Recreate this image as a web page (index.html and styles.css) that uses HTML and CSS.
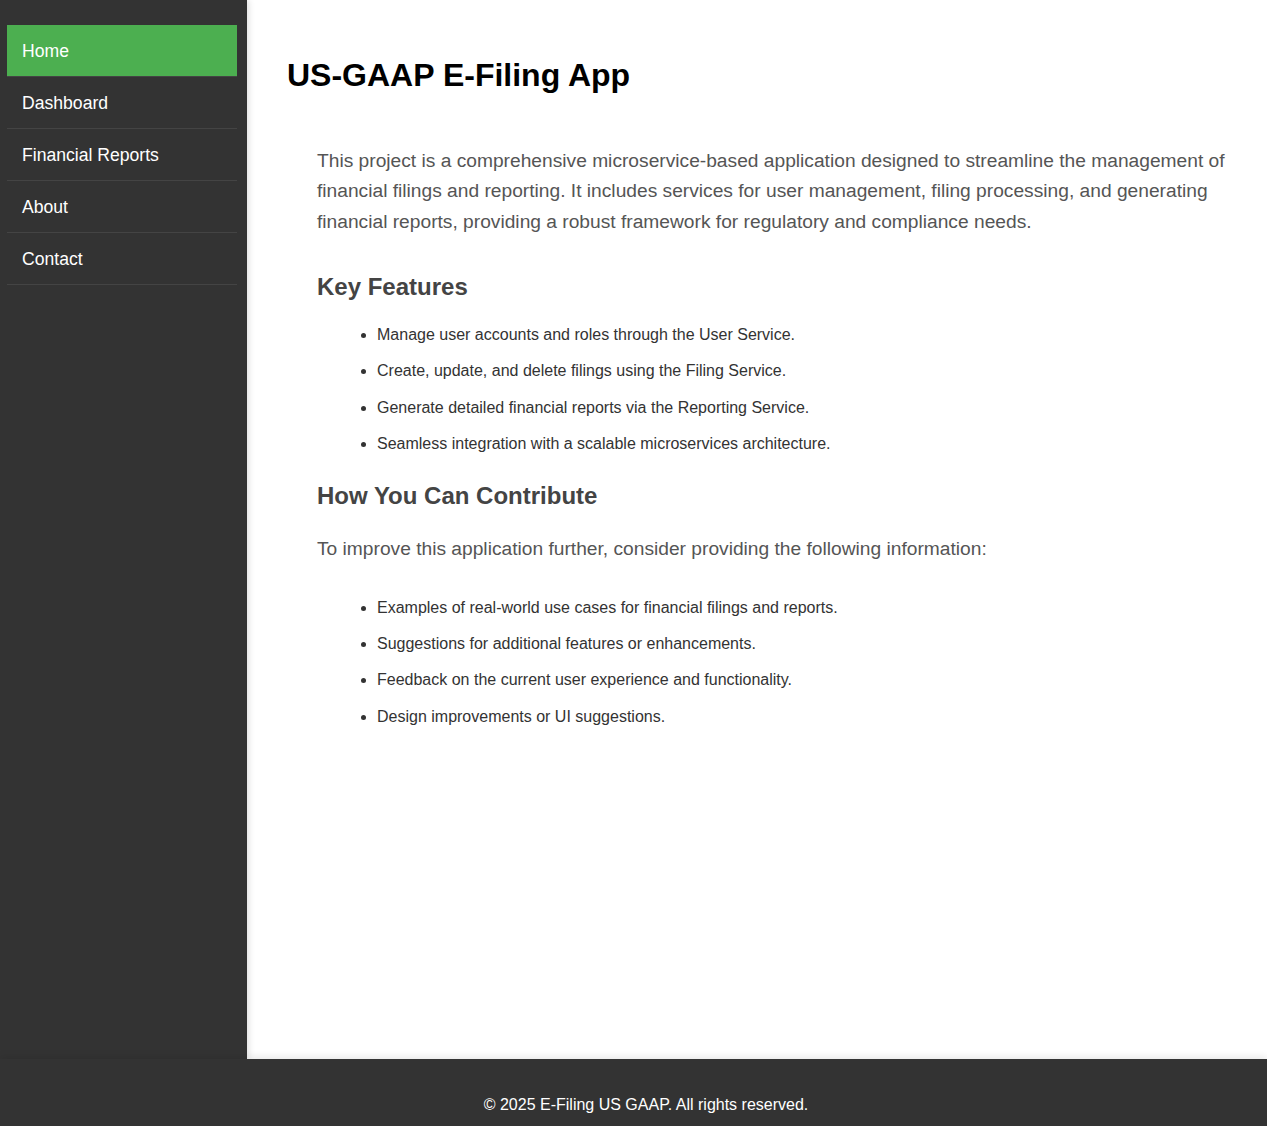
FILE: index.html
```html
<!DOCTYPE html>
<html lang="en">
<head>
<meta charset="utf-8">
<title>US-GAAP E-Filing App</title>
<link rel="stylesheet" href="styles.css">
</head>
<body>
<div class="layout">
  <nav class="sidebar">
    <ul class="nav">
      <li class="nav-item active"><a href="#">Home</a></li>
      <li class="nav-item"><a href="#">Dashboard</a></li>
      <li class="nav-item"><a href="#">Financial Reports</a></li>
      <li class="nav-item"><a href="#">About</a></li>
      <li class="nav-item"><a href="#">Contact</a></li>
    </ul>
  </nav>
  <main class="content">
    <h1 class="title">US-GAAP E-Filing App</h1>
    <section class="section">
      <p class="intro">This project is a comprehensive microservice-based application designed to streamline the management of financial filings and reporting. It includes services for user management, filing processing, and generating financial reports, providing a robust framework for regulatory and compliance needs.</p>
      <h2 class="heading">Key Features</h2>
      <ul class="list list-first">
        <li>Manage user accounts and roles through the User Service.</li>
        <li>Create, update, and delete filings using the Filing Service.</li>
        <li>Generate detailed financial reports via the Reporting Service.</li>
        <li>Seamless integration with a scalable microservices architecture.</li>
      </ul>
      <h2 class="heading heading-second">How You Can Contribute</h2>
      <p class="lead">To improve this application further, consider providing the following information:</p>
      <ul class="list list-second">
        <li>Examples of real-world use cases for financial filings and reports.</li>
        <li>Suggestions for additional features or enhancements.</li>
        <li>Feedback on the current user experience and functionality.</li>
        <li>Design improvements or UI suggestions.</li>
      </ul>
    </section>
  </main>
</div>
<footer class="footer">
  <p>&copy; 2025 E-Filing US GAAP. All rights reserved.</p>
</footer>
</body>
</html>
```

FILE: styles.css
```css
* { box-sizing: border-box; }

html, body {
  margin: 0;
  padding: 0;
}

body {
  font-family: "Liberation Sans", Arial, sans-serif;
  background: #ffffff;
  color: #333;
}

.layout {
  display: flex;
  min-height: calc(100vh - 67px);
}

.sidebar {
  width: 247px;
  flex: 0 0 247px;
  background: #333333;
  padding: 25px 10px 0 7px;
  position: relative;
  z-index: 1;
  box-shadow: 2px 0 6px rgba(0, 0, 0, 0.12);
}

.nav {
  list-style: none;
  margin: 0;
  padding: 0;
}

.nav-item {
  border-bottom: 1px solid #444444;
}

.nav-item a {
  display: block;
  padding: 16px 15px 14px 15px;
  font-size: 17.6px;
  line-height: 21px;
  color: #ffffff;
  text-decoration: none;
}

.nav-item.active a {
  background: #4caf50;
}

.content {
  flex: 1;
  background: #ffffff;
  padding: 57px 40px 40px 40px;
}

.title {
  margin: 0;
  font-size: 32px;
  font-weight: bold;
  color: #000;
  line-height: normal;
}

.section {
  padding: 0 0 0 30px;
}

.intro, .lead {
  margin: 0;
  font-size: 19.2px;
  line-height: 1.6;
  color: #555555;
}

.intro { margin-top: 51.5px; }

.heading {
  margin: 35.5px 0 0 0;
  font-size: 24px;
  font-weight: bold;
  color: #444444;
  line-height: normal;
}

.heading-second { margin-top: 25px; }

.lead { margin-top: 24px; }

.list {
  margin: 21px 0 0 0;
  padding-left: 60px;
  font-size: 16px;
  line-height: 26px;
  color: #333333;
}

.list-second { margin-top: 30.5px; }

.list li + li { margin-top: 10.2px; }

.footer {
  position: relative;
  z-index: 2;
  background: #333333;
  color: #ffffff;
  text-align: center;
  padding: 21px 0 19px 25px;
  box-shadow: 0 -2px 8px rgba(0, 0, 0, 0.1);
}

.footer p {
  margin: 16px 0;
  font-size: 16px;
}
```
